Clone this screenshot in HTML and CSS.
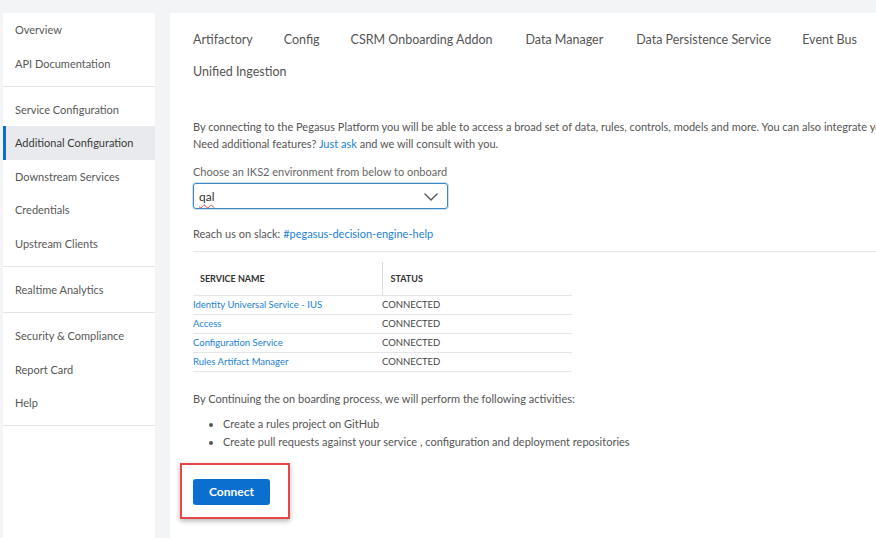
FILE: index.html
```html
<!DOCTYPE html>
<html>
<head>
<meta charset="utf-8">
<link rel="stylesheet" href="styles.css">
</head>
<body>
<div class="app">
  <nav class="sidebar">
    <div class="group">
      <a class="nav-item">Overview</a>
      <a class="nav-item">API Documentation</a>
    </div>
    <div class="group">
      <a class="nav-item">Service Configuration</a>
      <a class="nav-item active">Additional Configuration</a>
      <a class="nav-item">Downstream Services</a>
      <a class="nav-item">Credentials</a>
      <a class="nav-item">Upstream Clients</a>
    </div>
    <div class="group">
      <a class="nav-item">Realtime Analytics</a>
    </div>
    <div class="group">
      <a class="nav-item">Security &amp; Compliance</a>
      <a class="nav-item">Report Card</a>
      <a class="nav-item">Help</a>
    </div>
  </nav>
  <main class="main">
    <div class="tabs">
      <span class="tab">Artifactory</span>
      <span class="tab">Config</span>
      <span class="tab">CSRM Onboarding Addon</span>
      <span class="tab">Data Manager</span>
      <span class="tab">Data Persistence Service</span>
      <span class="tab">Event Bus</span>
      <span class="tab">Unified Ingestion</span>
    </div>
    <p class="intro">By connecting to the Pegasus Platform you will be able to access a broad set of data, rules, controls, models and more. You can also integrate your own services with the platform.<br>Need additional features? <a class="link">Just ask</a> and we will consult with you.</p>
    <label class="field-label">Choose an IKS2 environment from below to onboard</label>
    <div class="select">
      <span class="select-value">qal</span>
      <svg class="chevron" width="14" height="8" viewBox="0 0 14 8"><path d="M1 1l6 6 6-6" fill="none" stroke="#555" stroke-width="1.4" stroke-linecap="round" stroke-linejoin="round"/></svg>
    </div>
    <p class="slack">Reach us on slack: <a class="link">#pegasus-decision-engine-help</a></p>
    <div class="rule"></div>
    <table class="services">
      <thead>
        <tr><th class="col-name">SERVICE NAME</th><th class="col-status">STATUS</th></tr>
      </thead>
      <tbody>
        <tr><td><a class="link">Identity Universal Service - IUS</a></td><td>CONNECTED</td></tr>
        <tr><td><a class="link">Access</a></td><td>CONNECTED</td></tr>
        <tr><td><a class="link">Configuration Service</a></td><td>CONNECTED</td></tr>
        <tr><td><a class="link">Rules Artifact Manager</a></td><td>CONNECTED</td></tr>
      </tbody>
    </table>
    <p class="continue">By Continuing the on boarding process, we will perform the following activities:</p>
    <ul class="activities">
      <li>Create a rules project on GitHub</li>
      <li>Create pull requests against your service , configuration and deployment repositories</li>
    </ul>
    <div class="highlight">
      <button class="btn-primary">Connect</button>
    </div>
  </main>
</div>
</body>
</html>
```

FILE: styles.css
```css
* { box-sizing: border-box; }
html, body { margin: 0; padding: 0; }
body {
  width: 876px;
  height: 538px;
  overflow: hidden;
  background: #f3f4f6;
  font-family: "Lato", "Open Sans", sans-serif;
  color: #555;
}
.app {
  display: flex;
  gap: 15px;
  padding: 13px 0 0 3px;
  height: 538px;
  width: max-content;
}
.sidebar {
  width: 152px;
  flex: 0 0 152px;
  background: #fff;
  height: 100%;
}
.group {
  border-bottom: 1px solid #e3e4e7;
  padding: 6px 0;
}
.group:first-child { padding-top: 0; }
.nav-item {
  display: flex;
  align-items: center;
  height: 33.4px;
  padding-left: 9px;
  font-size: 11px;
  color: #585858;
  border-left: 3px solid transparent;
}
.active {
  background: #e9eaed;
  border-left-color: #0b6fcf;
  color: #3a3a3a;
}
.main {
  flex: 0 0 760px;
  background: #fff;
  height: 100%;
  padding: 11px 23px 0;
}
.tabs {
  display: flex;
  flex-wrap: wrap;
  column-gap: 31px;
  width: 700px;
}
.tab {
  line-height: 32px;
  font-size: 12.5px;
  color: #555;
}
.tab:nth-child(4), .tab:nth-child(5) { margin-left: 2px; }
.intro {
  margin: 30px 0 0;
  font-size: 11px;
  line-height: 17px;
  white-space: nowrap;
}
.link { color: #1b7fd6; text-decoration: none; }
.field-label {
  display: block;
  margin-top: 11px;
  font-size: 11px;
  line-height: 17px;
  color: #666;
}
.select {
  margin-top: 3px;
  width: 255px;
  height: 26px;
  border: 1px solid #3d86c6;
  border-radius: 3px;
  display: flex;
  align-items: center;
  justify-content: space-between;
  padding: 1px 9px 0 5px;
  box-shadow: 0 0 0 1px rgba(61,134,198,0.25);
}
.select-value {
  font-size: 12px;
  color: #333;
  text-decoration: underline wavy #e05050;
  text-decoration-thickness: 1px;
  text-underline-offset: 3px;
}
.slack {
  margin: 16px 0 0;
  font-size: 11px;
  line-height: 17px;
}
.rule {
  margin-top: 9px;
  border-top: 1px solid #e6e6e6;
}
.services {
  margin-top: 10px;
  border-collapse: collapse;
  width: 379px;
  font-size: 9.5px;
}
.services th {
  text-align: left;
  font-size: 9px;
  font-weight: 700;
  color: #333;
  height: 33px;
  padding: 0 7px;
  border-bottom: 1px solid #e6e6e6;
}
.services th.col-name { width: 189px; }
.services th.col-status { border-left: 1px solid #ddd; padding-left: 8px; }
.services td {
  height: 19px;
  padding: 0;
  border-bottom: 1px solid #e6e6e6;
  color: #444;
}
.continue {
  margin: 18px 0 0;
  font-size: 11px;
  line-height: 17px;
}
.activities {
  margin: 8px 0 0;
  padding-left: 30px;
  font-size: 11px;
  line-height: 18px;
}
.highlight {
  display: inline-block;
  margin: 12px 0 0 -13px;
  padding: 14px 18px 12px 11px;
  border: 2px solid #e8474a;
  box-shadow: 0 2px 5px rgba(0,0,0,0.3);
}
.btn-primary {
  display: block;
  width: 77px;
  height: 26px;
  border: 0;
  border-radius: 3px;
  background: #0b6fcf;
  color: #fff;
  font-family: inherit;
  font-size: 12px;
  font-weight: 700;
}
```
